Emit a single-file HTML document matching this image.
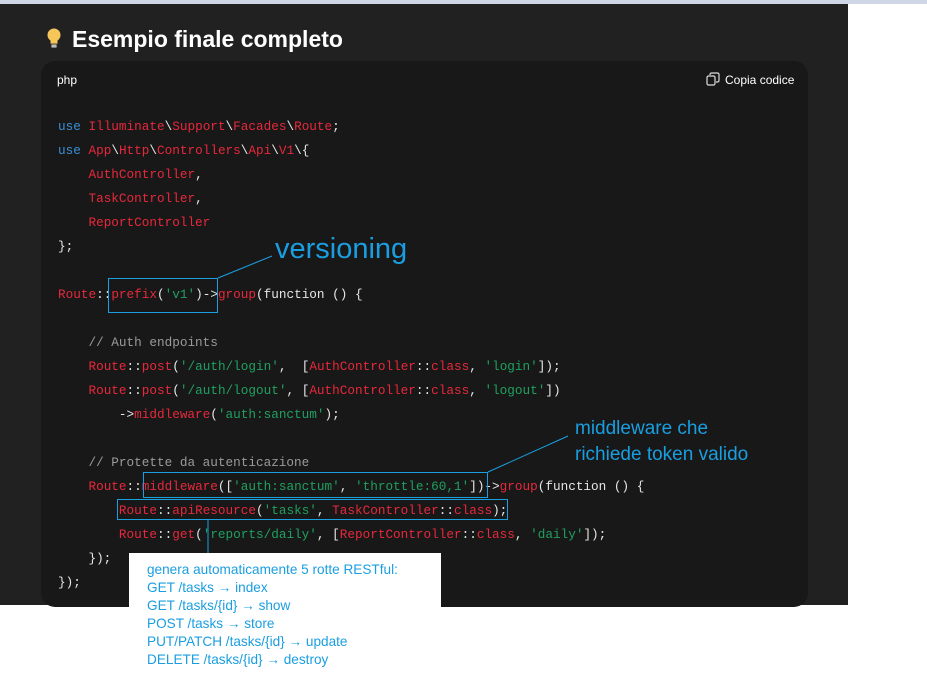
<!DOCTYPE html>
<html><head><meta charset="utf-8"><style>
*{margin:0;padding:0;box-sizing:border-box}
body{width:927px;height:689px;background:#fff;position:relative;overflow:hidden;font-family:"Liberation Sans",sans-serif}
#top{position:absolute;left:0;top:0;width:927px;height:4px;background:#cfd6e6}
#dark{position:absolute;left:0;top:4px;width:848px;height:601px;background:#212121}
h1{position:absolute;left:72px;top:26px;font-size:23px;font-weight:bold;color:#fff}
#code{position:absolute;left:41px;top:61px;width:767px;height:546px;background:#181818;border-radius:14px}
.lang{position:absolute;left:57px;top:73px;font-size:12px;color:#fff}
.copy{position:absolute;left:725px;top:73px;font-size:12px;color:#fff}
pre{position:absolute;left:58px;top:115px;font-family:"Liberation Mono",monospace;font-size:12.7px;line-height:24px;color:#e6e6e6}
.k{color:#3b8fd6}.r{color:#e8283c}.g{color:#1fa060}.c{color:#9a9a9a}
.box{position:absolute;border:1px solid #1aa0e0}
.ann{position:absolute;color:#1a9ee0;font-family:"Liberation Sans",sans-serif}
#wb{position:absolute;left:129px;top:553px;width:312px;height:60px;background:#fff}
</style></head><body>
<div id="top"></div><div id="dark"></div>
<svg style="position:absolute;left:44px;top:27px" width="20" height="24" viewBox="0 0 20 24"><circle cx="10" cy="8" r="7" fill="#f7c65a" stroke="#222" stroke-width="1"/><rect x="6.5" y="13" width="7" height="4" fill="#f7c65a"/><rect x="7" y="17" width="6" height="4" fill="#bbb" stroke="#222" stroke-width=".8"/></svg>
<h1>Esempio finale completo</h1>
<div id="code"></div>
<div class="lang">php</div>
<svg style="position:absolute;left:706px;top:72px" width="14" height="14" viewBox="0 0 14 14" fill="none" stroke="#ddd" stroke-width="1.2"><rect x="1" y="4" width="8" height="9" rx="1.5"/><path d="M4 3V2.5A1.5 1.5 0 0 1 5.5 1h6A1.5 1.5 0 0 1 13 2.5v6A1.5 1.5 0 0 1 11.5 10H10"/></svg>
<div class="copy">Copia codice</div>
<pre><span class="k">use</span> <span class="r">Illuminate</span>\<span class="r">Support</span>\<span class="r">Facades</span>\<span class="r">Route</span>;
<span class="k">use</span> <span class="r">App</span>\<span class="r">Http</span>\<span class="r">Controllers</span>\<span class="r">Api</span>\<span class="r">V1</span>\{
    <span class="r">AuthController</span>,
    <span class="r">TaskController</span>,
    <span class="r">ReportController</span>
};

<span class="r">Route</span>::<span class="r">prefix</span>(<span class="g">'v1'</span>)-&gt;<span class="r">group</span>(function () {

    <span class="c">// Auth endpoints</span>
    <span class="r">Route</span>::<span class="r">post</span>(<span class="g">'/auth/login'</span>,  [<span class="r">AuthController</span>::<span class="r">class</span>, <span class="g">'login'</span>]);
    <span class="r">Route</span>::<span class="r">post</span>(<span class="g">'/auth/logout'</span>, [<span class="r">AuthController</span>::<span class="r">class</span>, <span class="g">'logout'</span>])
        -&gt;<span class="r">middleware</span>(<span class="g">'auth:sanctum'</span>);

    <span class="c">// Protette da autenticazione</span>
    <span class="r">Route</span>::<span class="r">middleware</span>([<span class="g">'auth:sanctum'</span>, <span class="g">'throttle:60,1'</span>])-&gt;<span class="r">group</span>(function () {
        <span class="r">Route</span>::<span class="r">apiResource</span>(<span class="g">'tasks'</span>, <span class="r">TaskController</span>::<span class="r">class</span>);
        <span class="r">Route</span>::<span class="r">get</span>(<span class="g">'reports/daily'</span>, [<span class="r">ReportController</span>::<span class="r">class</span>, <span class="g">'daily'</span>]);
    });
});</pre>
<div class="box" style="left:108px;top:278px;width:110px;height:35px"></div>
<div class="box" style="left:143px;top:472px;width:345px;height:26px"></div>
<div class="box" style="left:117px;top:499px;width:391px;height:21px"></div>
<svg style="position:absolute;left:0;top:0" width="927" height="689"><g stroke="#1aa0e0" stroke-width="1"><line x1="218" y1="278" x2="272" y2="256"/><line x1="488" y1="472" x2="568" y2="436"/><line x1="208" y1="520" x2="208" y2="553"/></g></svg>
<div class="ann" style="left:275px;top:233px;font-size:29px">versioning</div>
<div class="ann" style="left:575px;top:416px;font-size:19px;line-height:26px">middleware che<br>richiede token valido</div>
<div id="wb"></div>
<div class="ann" style="left:147px;top:561px;font-size:13.6px;line-height:18px">genera automaticamente 5 rotte RESTful:<br>GET /tasks → index<br>GET /tasks/{id} → show<br>POST /tasks → store<br>PUT/PATCH /tasks/{id} → update<br>DELETE /tasks/{id} → destroy</div>
</body></html>
